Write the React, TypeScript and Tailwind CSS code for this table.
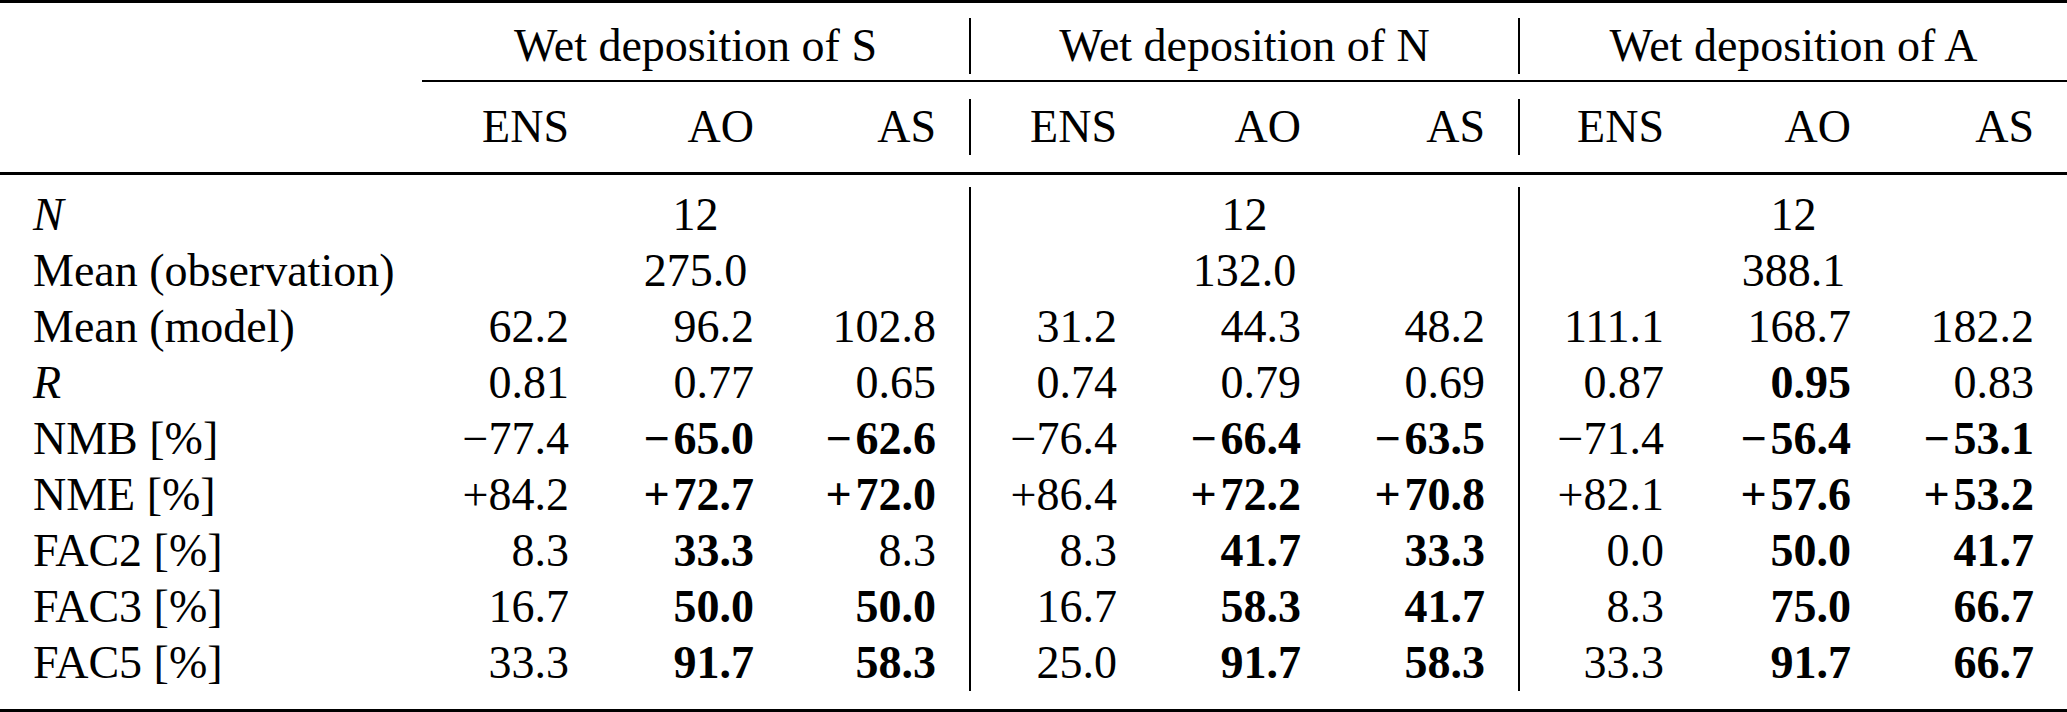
import React from "react";

type Cell = { v: string; b?: boolean };

const GRID =
  "grid grid-cols-[422px_180px_185px_182px_181px_184px_184px_179px_187px_183px]";

const HS = "\u200A";

const body: { label: string; italic?: boolean; multi?: string[]; cells?: Cell[] }[] = [
  { label: "N", italic: true, multi: ["12", "12", "12"] },
  { label: "Mean (observation)", multi: ["275.0", "132.0", "388.1"] },
  {
    label: "Mean (model)",
    cells: ["62.2", "96.2", "102.8", "31.2", "44.3", "48.2", "111.1", "168.7", "182.2"].map((v) => ({ v })),
  },
  {
    label: "R",
    italic: true,
    cells: [
      { v: "0.81" }, { v: "0.77" }, { v: "0.65" },
      { v: "0.74" }, { v: "0.79" }, { v: "0.69" },
      { v: "0.87" }, { v: "0.95", b: true }, { v: "0.83" },
    ],
  },
  {
    label: "NMB [%]",
    cells: [
      { v: "\u221277.4" }, { v: "\u2212" + HS + "65.0", b: true }, { v: "\u2212" + HS + "62.6", b: true },
      { v: "\u221276.4" }, { v: "\u2212" + HS + "66.4", b: true }, { v: "\u2212" + HS + "63.5", b: true },
      { v: "\u221271.4" }, { v: "\u2212" + HS + "56.4", b: true }, { v: "\u2212" + HS + "53.1", b: true },
    ],
  },
  {
    label: "NME [%]",
    cells: [
      { v: "+84.2" }, { v: "+" + HS + "72.7", b: true }, { v: "+" + HS + "72.0", b: true },
      { v: "+86.4" }, { v: "+" + HS + "72.2", b: true }, { v: "+" + HS + "70.8", b: true },
      { v: "+82.1" }, { v: "+" + HS + "57.6", b: true }, { v: "+" + HS + "53.2", b: true },
    ],
  },
  {
    label: "FAC2 [%]",
    cells: [
      { v: "8.3" }, { v: "33.3", b: true }, { v: "8.3" },
      { v: "8.3" }, { v: "41.7", b: true }, { v: "33.3", b: true },
      { v: "0.0" }, { v: "50.0", b: true }, { v: "41.7", b: true },
    ],
  },
  {
    label: "FAC3 [%]",
    cells: [
      { v: "16.7" }, { v: "50.0", b: true }, { v: "50.0", b: true },
      { v: "16.7" }, { v: "58.3", b: true }, { v: "41.7", b: true },
      { v: "8.3" }, { v: "75.0", b: true }, { v: "66.7", b: true },
    ],
  },
  {
    label: "FAC5 [%]",
    cells: [
      { v: "33.3" }, { v: "91.7", b: true }, { v: "58.3", b: true },
      { v: "25.0" }, { v: "91.7", b: true }, { v: "58.3", b: true },
      { v: "33.3" }, { v: "91.7", b: true }, { v: "66.7", b: true },
    ],
  },
];

function cellClass(i: number) {
  const border = i === 3 || i === 6 ? " border-l-2 border-black" : "";
  return "text-right pr-[33px] h-[56px] whitespace-nowrap" + border;
}

export default function App() {
  return (
    <div className="w-[2067px] h-[712px] bg-white text-black font-['Liberation_Serif',serif] text-[46px] leading-[56px] overflow-hidden">
      <div className="h-[3px] bg-black" />
      <div className="h-[15px]" />
      {/* header row 1 */}
      <div className={GRID}>
        <div className="h-[56px]" />
        <div className="col-span-3 text-center h-[56px]">Wet deposition of S</div>
        <div className="col-span-3 text-center h-[56px] border-l-2 border-black">Wet deposition of N</div>
        <div className="col-span-3 text-center h-[56px] border-l-2 border-black">Wet deposition of A</div>
      </div>
      <div className="h-[6px]" />
      <div className="ml-[422px] h-[2px] bg-black" />
      <div className="h-[17px]" />
      {/* header row 2 */}
      <div className={GRID}>
        <div className="h-[56px]" />
        {["ENS", "AO", "AS", "ENS", "AO", "AS", "ENS", "AO", "AS"].map((h, i) => (
          <div key={i} className={cellClass(i)}>
            {h}
          </div>
        ))}
      </div>
      <div className="h-[17px]" />
      <div className="h-[3px] bg-black" />
      <div className="h-[12px]" />
      {/* body */}
      {body.map((r, ri) => (
        <div key={ri} className={GRID}>
          <div className={"pl-[33px] h-[56px] whitespace-nowrap" + (r.italic ? " italic" : "")}>{r.label}</div>
          {r.multi
            ? r.multi.map((m, gi) => (
                <div
                  key={gi}
                  className={
                    "col-span-3 text-center h-[56px]" + (gi > 0 ? " border-l-2 border-black" : "")
                  }
                >
                  {m}
                </div>
              ))
            : r.cells!.map((c, i) => (
                <div key={i} className={cellClass(i) + (c.b ? " font-bold" : "")}>
                  {c.v}
                </div>
              ))}
        </div>
      ))}
      <div className="h-[18px]" />
      <div className="h-[3px] bg-black" />
    </div>
  );
}
